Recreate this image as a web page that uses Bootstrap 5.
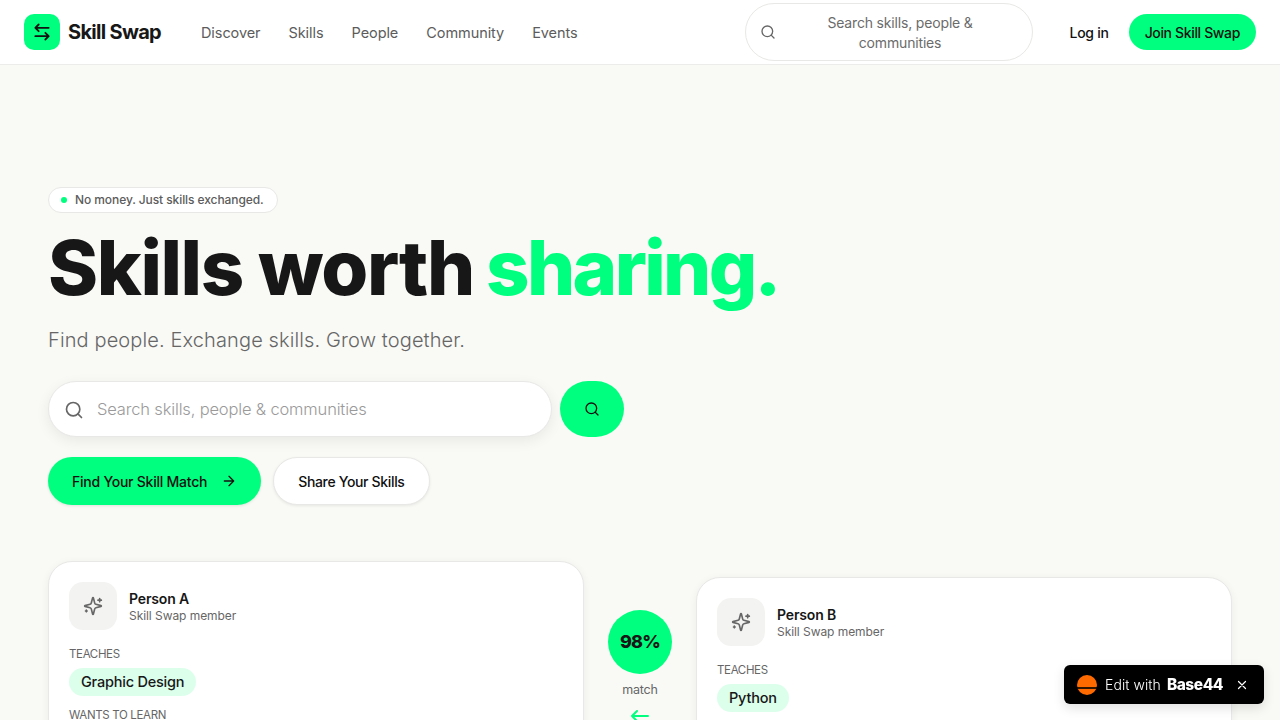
<!DOCTYPE html>
<html lang="en">
<head>
<meta charset="UTF-8">
<title>Skill Swap</title>
<link href="https://cdn.jsdelivr.net/npm/bootstrap@5.3.2/dist/css/bootstrap.min.css" rel="stylesheet">
<style>
  html, body { height: 720px; overflow: hidden; }
  body { background: #f9faf6; color: #171717; font-family: "Inter", "Liberation Sans", sans-serif; letter-spacing: -.01em; }
  .top-bar { height: 65px; background: #fff; border-bottom: 1px solid #ececea; padding: 0 24px; }
  .logo-box { width: 36px; height: 36px; border-radius: 10px; background: #00ff7f; }
  .logo-name { font-size: 20px; font-weight: 700; letter-spacing: -.035em; margin-left: 8px; }
  .nav-links { margin-left: 40px; gap: 28px; font-size: 14.5px; letter-spacing: -.005em; color: #5c5c5c; padding-top: 1px; }
  .top-search { width: 288px; height: 58px; border: 1px solid #e8e8e6; border-radius: 29px; margin-left: auto; padding: 0 14px; font-size: 14px; letter-spacing: -.012em; color: #6b6b6b; line-height: 20px; }
  .top-search span { flex: 1; text-align: center; padding: 1px 20px 0 27px; }
  .login-link { margin-left: 37px; font-size: 14px; font-weight: 500; letter-spacing: -.02em; color: #111; padding-top: 1px; }
  .join-btn { margin-left: 20px; height: 36px; padding: 1px 16px 0; border-radius: 18px; background: #00ff7f; font-size: 14px; font-weight: 500; letter-spacing: -.025em; color: #111; }
  .hero { padding: 120px 48px 0; }
  .tag-pill { height: 26px; padding: 0 13px 0 12px; background: #fff; border: 1px solid #e8e8e6; border-radius: 13px; font-size: 12px; font-weight: 500; letter-spacing: -.007em; color: #5c5c5c; gap: 8px; }
  .tag-dot { width: 6px; height: 6px; border-radius: 50%; background: #00ff7f; }
  .hero-title { font-size: 76px; font-weight: 800; line-height: 80px; letter-spacing: -.0186em; margin: 14px 0 0; color: #171717; }
  .hero-title em { font-style: normal; color: #00ff7f; letter-spacing: -.035em; margin-left: -3px; }
  .hero-sub { font-size: 20px; font-weight: 300; letter-spacing: .006em; color: #666; margin: 19px 0 0; line-height: 28px; }
  .search-row { margin-top: 27px; }
  .hero-search { width: 504px; height: 56px; background: #fff; border: 1px solid #e8e8e6; border-radius: 28px; padding: 1px 15px 0; gap: 13px; font-size: 16.5px; font-weight: 300; color: #9a9a9a; box-shadow: 0 4px 14px rgba(0,0,0,.07); }
  .round-go { width: 64px; height: 56px; border-radius: 28px; background: #00ff7f; margin-left: 8px; }
  .cta-main { height: 48px; padding: 0 24px; border-radius: 24px; background: #00ff7f; font-size: 14px; font-weight: 500; letter-spacing: -.017em; color: #111; gap: 14px; box-shadow: 0 1px 3px rgba(0,0,0,.1); }
  .cta-alt { height: 48px; padding: 0 24px; border-radius: 24px; background: #fff; border: 1px solid #e8e8e6; font-size: 14px; font-weight: 500; letter-spacing: -.024em; color: #111; margin-left: 12px; box-shadow: 0 1px 3px rgba(0,0,0,.08); }
  .match-row { margin-top: 56px; gap: 24px; }
  .person-card { flex: 1; height: 260px; background: #fff; border: 1px solid #e8e8e6; border-radius: 24px; padding: 20px; box-shadow: 0 2px 8px rgba(0,0,0,.06); }
  .person-low { margin-top: 16px; }
  .avatar-box { width: 48px; height: 48px; border-radius: 14px; background: #f3f4f1; }
  .person-text { padding-top: 2px; }
  .person-name { font-size: 14px; font-weight: 600; line-height: 17px; }
  .person-role { font-size: 12px; letter-spacing: -.005em; color: #666; line-height: 16px; margin-top: 1px; }
  .field-label { font-size: 11.5px; letter-spacing: -.03em; color: #666; margin-top: 16px; line-height: 16px; }
  .skill-chip { display: inline-block; margin-top: 6px; padding: 0 12px; height: 28px; line-height: 28px; border-radius: 14px; background: #dcffec; font-size: 14.5px; font-weight: 500; letter-spacing: -.015em; }
  .skill-chip + .field-label { margin-top: 11px; }
  .match-mid { width: 64px; padding-top: 49px; text-align: center; }
  .match-num { width: 64px; height: 64px; border-radius: 50%; background: #00ff7f; font-size: 18px; font-weight: 800; letter-spacing: -.045em; padding-bottom: 2px; }
  .match-word { font-size: 12.5px; color: #666; margin-top: 7px; margin-bottom: 3px; }
  .edit-badge { position: fixed; right: 16px; bottom: 16px; width: 200px; height: 39px; background: #000; color: #fff; border-radius: 6px; padding: 0 16px 0 13px; font-size: 14px; font-weight: 300; letter-spacing: .005em; box-shadow: 0 4px 12px rgba(0,0,0,.12); }
  .edit-mark { margin-right: 8px; }
  .edit-brand { font-weight: 800; font-size: 15.5px; letter-spacing: -.03em; margin-left: 6px; }
</style>
</head>
<body>
<header class="top-bar d-flex align-items-center">
  <div class="logo-box d-flex align-items-center justify-content-center">
    <svg width="20" height="20" viewBox="0 0 24 24" fill="none" stroke="#111" stroke-width="2.2" stroke-linecap="round" stroke-linejoin="round"><path d="M20 7H4M8 3 4 7l4 4M4 17h16M16 13l4 4-4 4"/></svg>
  </div>
  <span class="logo-name">Skill Swap</span>
  <nav class="nav-links d-flex"><span>Discover</span><span>Skills</span><span>People</span><span>Community</span><span>Events</span></nav>
  <div class="top-search d-flex align-items-center">
    <svg width="16" height="16" viewBox="0 0 24 24" fill="none" stroke="#666" stroke-width="2" stroke-linecap="round"><circle cx="11" cy="11" r="8"/><path d="m21 21-4.3-4.3"/></svg>
    <span>Search skills, people &amp; communities</span>
  </div>
  <span class="login-link">Log in</span>
  <span class="join-btn d-flex align-items-center">Join Skill Swap</span>
</header>
<main class="hero">
  <div class="tag-pill d-inline-flex align-items-center"><span class="tag-dot"></span>No money. Just skills exchanged.</div>
  <h1 class="hero-title">Skills worth <em>sharing.</em></h1>
  <p class="hero-sub">Find people. Exchange skills. Grow together.</p>
  <div class="search-row d-flex">
    <div class="hero-search d-flex align-items-center">
      <svg width="20" height="20" viewBox="0 0 24 24" fill="none" stroke="#666" stroke-width="2" stroke-linecap="round"><circle cx="11" cy="11" r="8"/><path d="m21 21-4.3-4.3"/></svg>
      Search skills, people &amp; communities
    </div>
    <div class="round-go d-flex align-items-center justify-content-center">
      <svg width="16" height="16" viewBox="0 0 24 24" fill="none" stroke="#111" stroke-width="2" stroke-linecap="round"><circle cx="11" cy="11" r="8"/><path d="m21 21-4.3-4.3"/></svg>
    </div>
  </div>
  <div class="d-flex mt-3 pt-1">
    <span class="cta-main d-flex align-items-center">Find Your Skill Match
      <svg width="16" height="16" viewBox="0 0 24 24" fill="none" stroke="#111" stroke-width="2" stroke-linecap="round" stroke-linejoin="round"><path d="M5 12h14M12 5l7 7-7 7"/></svg>
    </span>
    <span class="cta-alt d-flex align-items-center">Share Your Skills</span>
  </div>
  <div class="match-row d-flex align-items-start">
    <section class="person-card">
      <div class="d-flex align-items-center gap-2">
        <div class="avatar-box d-flex align-items-center justify-content-center me-1">
          <svg width="20" height="20" viewBox="0 0 24 24" fill="none" stroke="#666" stroke-width="2" stroke-linecap="round" stroke-linejoin="round"><path d="M9.937 15.5A2 2 0 0 0 8.5 14.063l-6.135-1.582a.5.5 0 0 1 0-.962L8.5 9.936A2 2 0 0 0 9.937 8.5l1.582-6.135a.5.5 0 0 1 .963 0L14.063 8.5A2 2 0 0 0 15.5 9.937l6.135 1.581a.5.5 0 0 1 0 .964L15.5 14.063a2 2 0 0 0-1.437 1.437l-1.582 6.135a.5.5 0 0 1-.963 0zM20 3v4M22 5h-4M4 17v2M5 18H3"/></svg>
        </div>
        <div class="person-text"><div class="person-name">Person A</div><div class="person-role">Skill Swap member</div></div>
      </div>
      <div class="field-label">TEACHES</div>
      <span class="skill-chip">Graphic Design</span>
      <div class="field-label">WANTS TO LEARN</div>
    </section>
    <div class="match-mid">
      <div class="match-num d-flex align-items-center justify-content-center">98%</div>
      <div class="match-word">match</div>
      <svg width="24" height="24" viewBox="0 0 24 24" fill="none" stroke="#00ff7f" stroke-width="2" stroke-linecap="round" stroke-linejoin="round"><path d="M20 12H4M9 7l-5 5 5 5"/></svg>
    </div>
    <section class="person-card person-low">
      <div class="d-flex align-items-center gap-2">
        <div class="avatar-box d-flex align-items-center justify-content-center me-1">
          <svg width="20" height="20" viewBox="0 0 24 24" fill="none" stroke="#666" stroke-width="2" stroke-linecap="round" stroke-linejoin="round"><path d="M9.937 15.5A2 2 0 0 0 8.5 14.063l-6.135-1.582a.5.5 0 0 1 0-.962L8.5 9.936A2 2 0 0 0 9.937 8.5l1.582-6.135a.5.5 0 0 1 .963 0L14.063 8.5A2 2 0 0 0 15.5 9.937l6.135 1.581a.5.5 0 0 1 0 .964L15.5 14.063a2 2 0 0 0-1.437 1.437l-1.582 6.135a.5.5 0 0 1-.963 0zM20 3v4M22 5h-4M4 17v2M5 18H3"/></svg>
        </div>
        <div class="person-text"><div class="person-name">Person B</div><div class="person-role">Skill Swap member</div></div>
      </div>
      <div class="field-label">TEACHES</div>
      <span class="skill-chip">Python</span>
    </section>
  </div>
</main>
<div class="edit-badge d-flex align-items-center">
  <svg class="edit-mark" width="20" height="20" viewBox="0 0 20 20"><circle cx="10" cy="10" r="10" fill="#ff6a00"/><rect y="12.2" width="20" height="1.6" fill="#000"/></svg>Edit with <span class="edit-brand">Base44</span>
  <svg class="ms-auto" width="12" height="12" viewBox="0 0 24 24" fill="none" stroke="#fff" stroke-width="2.4" stroke-linecap="round"><path d="M5 5l14 14M19 5 5 19"/></svg>
</div>
<script src="https://cdn.jsdelivr.net/npm/bootstrap@5.3.2/dist/js/bootstrap.bundle.min.js"></script>
</body>
</html>
